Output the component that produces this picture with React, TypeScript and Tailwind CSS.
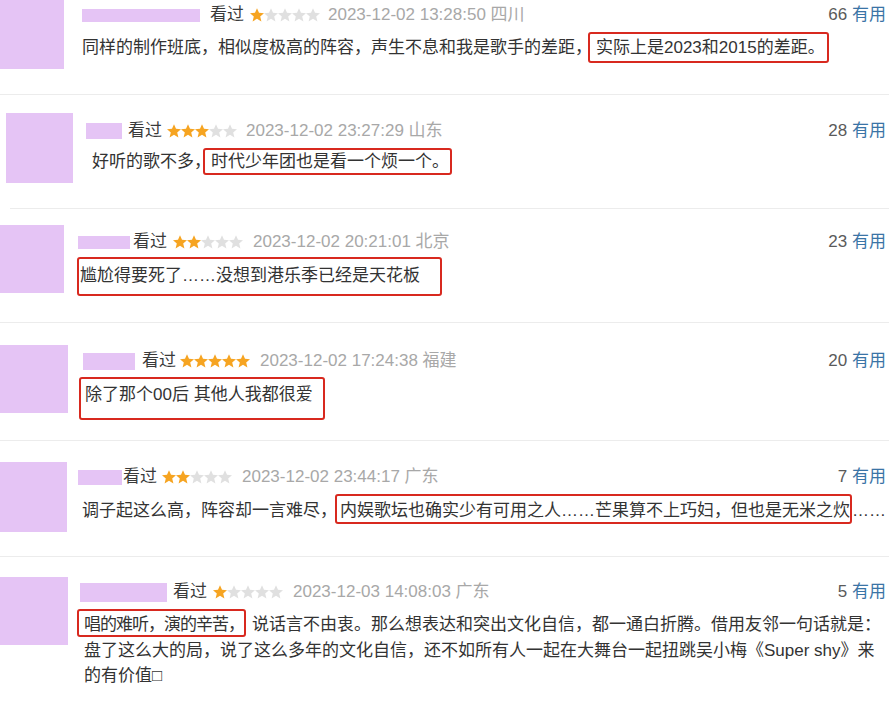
import React from "react";

function Stars({ n, className }: { n: number; className: string }) {
  return (
    <span className={`flex items-center ${className}`}>
      {[0, 1, 2, 3, 4].map((i) => (
        <svg key={i} viewBox="1.5 1.5 21 21" className="w-[14px] h-[14px]">
          <path
            d="M12 1.8l3 7 7.5.6-5.7 4.9 1.8 7.4L12 17.7l-6.6 4 1.8-7.4-5.7-4.9 7.5-.6z"
            fill={i < n ? "#f6a421" : "#e0e0e0"}
          />
        </svg>
      ))}
    </span>
  );
}

type P = {
  h: string;
  av: string;
  col: string;
  bar: string;
  km: string;
  sm: string;
  dm: string;
  stars: number;
  date: string;
  votes: string;
  row: string;
  children: React.ReactNode;
};

function Block(p: P) {
  return (
    <div className={`flex ${p.h}`}>
      <div className={`shrink-0 bg-[#e5c4f5] ${p.av}`} />
      <div className={`flex-1 min-w-0 pr-[3px] ${p.col}`}>
        <div className="flex h-[20px] items-center justify-between text-[17px] leading-[20px] whitespace-nowrap">
          <div className="flex items-center">
            <div className={`shrink-0 bg-[#e5c4f5] ${p.bar}`} />
            <span className={`text-[#3a3a3a] ${p.km}`}>看过</span>
            <Stars n={p.stars} className={p.sm} />
            <span className={`text-[#a8a8a8] ${p.dm}`}>{p.date}</span>
          </div>
          <div>
            <span className="text-[#5a5a5a]">{p.votes}</span>{" "}
            <span className="text-[#3a74a6]">有用</span>
          </div>
        </div>
        <div className={`text-[17px] text-[#333333] whitespace-nowrap ${p.row}`}>{p.children}</div>
      </div>
    </div>
  );
}

export default function App() {
  return (
    <div className="w-[889px] h-[707px] bg-white overflow-hidden font-['Liberation_Sans','Noto_Sans_CJK_SC',sans-serif]">
      <Block
        h="h-[94px]"
        av="w-[64px] h-[69px] mt-0"
        col="ml-[18px] pt-[5px]"
        bar="w-[118px] h-[13px]"
        km="ml-[10px]"
        sm="ml-[6px]"
        dm="ml-[8px]"
        stars={1}
        date="2023-12-02 13:28:50 四川"
        votes="66"
        row="mt-[10px] leading-[26px]"
      >
        同样的制作班底，相似度极高的阵容，声生不息和我是歌手的差距，
        <span className="ml-[-4px] border-2 border-[#d8291f] rounded-[3px] py-[4px] pl-[6px] pr-[2px]">实际上是2023和2015的差距。</span>
      </Block>
      <div className="h-px bg-[#ececec]" />
      <Block
        h="h-[113px]"
        av="w-[67px] h-[70px] mt-[18px] ml-[6px]"
        col="ml-[13px] pt-[26px]"
        bar="w-[36px] h-[16px]"
        km="ml-[6px]"
        sm="ml-[5px]"
        dm="ml-[9px]"
        stars={3}
        date="2023-12-02 23:27:29 山东"
        votes="28"
        row="mt-[8px] ml-[6px] leading-[26px]"
      >
        好听的歌不多，
        <span className="ml-[-8px] border-2 border-[#d8291f] rounded-[3px] py-[2px] pl-[6px] pr-[1px]">时代少年团也是看一个烦一个。</span>
      </Block>
      <div className="h-px bg-[#ececec] ml-[10px]" />
      <Block
        h="h-[113px]"
        av="w-[64px] h-[68px] mt-[16px]"
        col="ml-[14px] pt-[23px]"
        bar="w-[52px] h-[13px]"
        km="ml-[3px]"
        sm="ml-[6px]"
        dm="ml-[10px]"
        stars={2}
        date="2023-12-02 20:21:01 北京"
        votes="23"
        row="mt-[11px] ml-[-1px] leading-[26px]"
      >
        <span className="border-2 border-[#d8291f] rounded-[3px] pt-[7px] pb-[9px] pl-[1px] pr-[20px]">尴尬得要死了……没想到港乐季已经是天花板</span>
      </Block>
      <div className="h-px bg-[#ececec]" />
      <Block
        h="h-[117px]"
        av="w-[68px] h-[68px] mt-[22px]"
        col="ml-[15px] pt-[28px]"
        bar="w-[52px] h-[17px]"
        km="ml-[7px]"
        sm="ml-[4px]"
        dm="ml-[10px]"
        stars={5}
        date="2023-12-02 17:24:38 福建"
        votes="20"
        row="mt-[11px] ml-[-4px] leading-[26px]"
      >
        <span className="border-2 border-[#d8291f] rounded-[3px] pt-[6px] pb-[14px] pl-[4px] pr-[10px]">除了那个00后 其他人我都很爱</span>
      </Block>
      <div className="h-px bg-[#ececec]" />
      <Block
        h="h-[115px]"
        av="w-[67px] h-[70px] mt-[21px]"
        col="ml-[11px] pt-[26px]"
        bar="w-[44px] h-[15px]"
        km="ml-[1px]"
        sm="ml-[5px]"
        dm="ml-[10px]"
        stars={2}
        date="2023-12-02 23:44:17 广东"
        votes="7"
        row="mt-[11px] ml-[4px] leading-[26px]"
      >
        调子起这么高，阵容却一言难尽，
        <span className="ml-[-2px] border-2 border-[#d8291f] rounded-[3px] pt-[5px] pb-[2px] pl-[3px] pr-0">内娱歌坛也确实少有可用之人……芒果算不上巧妇，但也是无米之炊</span>
        ……
      </Block>
      <div className="h-px bg-[#ececec]" />
      <Block
        h="h-[150px]"
        av="w-[68px] h-[68px] mt-[20px]"
        col="ml-[12px] pt-[25px]"
        bar="w-[87px] h-[19px]"
        km="ml-[6px]"
        sm="ml-[6px]"
        dm="ml-[10px]"
        stars={1}
        date="2023-12-03 14:08:03 广东"
        votes="5"
        row="mt-[10px] ml-[-3px] leading-[25.5px]"
      >
        <span className="border-2 border-[#d8291f] rounded-[3px] pt-[4px] pb-[1px] pl-[5px] pr-0 tracking-[-1px]">唱的难听，演的辛苦，</span>
        <span className="ml-[6px]">说话言不由衷。那么想表达和突出文化自信，都一通白折腾。借用友邻一句话就是：</span>
        <br />
        <span className="ml-[7px]">盘了这么大的局，说了这么多年的文化自信，还不如所有人一起在大舞台一起扭跳吴小梅《Super shy》来</span>
        <br />
        <span className="ml-[7px]">的有价值□</span>
      </Block>
    </div>
  );
}
